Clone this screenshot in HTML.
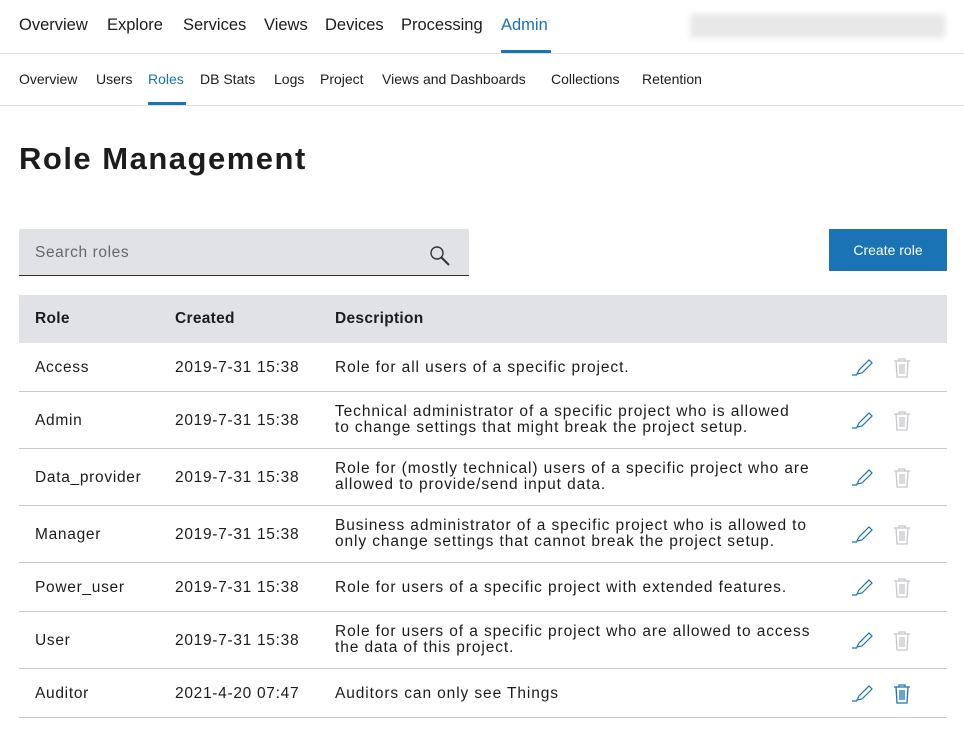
<!DOCTYPE html><html><head><style>
body{margin:0;width:964px;height:738px;overflow:hidden;background:#fff;font-family:"Liberation Sans",sans-serif;color:#1c1c1c;position:relative}
.a{position:absolute;white-space:nowrap}
.t1{font-size:16.5px;top:16px}
.t2{font-size:14px;top:71px}
.blue{color:#1a73b5}
.line{position:absolute;left:0;width:964px;height:1px;background:#dfdfdf}
.cell{position:absolute;font-size:15.5px;line-height:16px;letter-spacing:0.9px}
.rl{position:absolute;left:19px;width:928px;height:1px;background:#c8c8c8}
</style></head><body>
<div class="a t1" style="left:19px">Overview</div>
<div class="a t1" style="left:107px">Explore</div>
<div class="a t1" style="left:183px">Services</div>
<div class="a t1" style="left:264px">Views</div>
<div class="a t1" style="left:325px">Devices</div>
<div class="a t1" style="left:401px">Processing</div>
<div class="a t1 blue" style="left:501px">Admin</div>
<div class="a" style="left:501px;top:50px;width:50px;height:3px;background:#1a73b5"></div>
<div class="a" style="left:690px;top:14px;width:255px;height:24px;background:#e8e8e8;filter:blur(3px)"></div>
<div class="line" style="top:53px"></div>
<div class="a t2" style="left:19px">Overview</div>
<div class="a t2" style="left:96px">Users</div>
<div class="a t2 blue" style="left:148px">Roles</div>
<div class="a t2" style="left:200px">DB Stats</div>
<div class="a t2" style="left:274px">Logs</div>
<div class="a t2" style="left:320px">Project</div>
<div class="a t2" style="left:382px">Views and Dashboards</div>
<div class="a t2" style="left:551px">Collections</div>
<div class="a t2" style="left:642px">Retention</div>
<div class="a" style="left:148px;top:102px;width:38px;height:3px;background:#1a73b5"></div>
<div class="line" style="top:105px"></div>
<div class="a" style="left:19px;top:141px;font-size:31px;font-weight:bold;letter-spacing:1.5px">Role Management</div>
<div class="a" style="left:19px;top:229px;width:450px;height:46px;background:#e0e2e5;border-bottom:1px solid #333"></div>
<div class="a" style="left:35px;top:244px;font-size:15.5px;letter-spacing:0.6px;color:#666">Search roles</div>
<svg class="a" style="left:428px;top:244px" width="24" height="24" viewBox="0 0 24 24"><circle cx="9" cy="9" r="6" fill="none" stroke="#333" stroke-width="1.4"/><path d="M13.5 13.5L21 21" stroke="#333" stroke-width="2"/></svg>
<div class="a" style="left:829px;top:229px;width:118px;height:42px;background:#1a73b5;color:#fff;font-size:14px;line-height:42px;text-align:center">Create role</div>
<div class="a" style="left:19px;top:295px;width:928px;height:48px;background:#e0e2e5"></div>
<div class="cell" style="left:35px;top:311px;font-weight:bold;letter-spacing:0.3px">Role</div>
<div class="cell" style="left:175px;top:311px;font-weight:bold;letter-spacing:0.3px">Created</div>
<div class="cell" style="left:335px;top:311px;font-weight:bold;letter-spacing:0.3px">Description</div>
<div id="rows"></div>
<script>
var d=[[343,392,"Access","2019-7-31 15:38","Role for all users of a specific project."],
[392,449,"Admin","2019-7-31 15:38","Technical administrator of a specific project who is allowed<br>to change settings that might break the project setup."],
[449,506,"Data_provider","2019-7-31 15:38","Role for (mostly technical) users of a specific project who are<br>allowed to provide/send input data."],
[506,563,"Manager","2019-7-31 15:38","Business administrator of a specific project who is allowed to<br>only change settings that cannot break the project setup."],
[563,612,"Power_user","2019-7-31 15:38","Role for users of a specific project with extended features."],
[612,669,"User","2019-7-31 15:38","Role for users of a specific project who are allowed to access<br>the data of this project."],
[669,718,"Auditor","2021-4-20 07:47","Auditors can only see Things"]];
var h="";d.forEach(function(r,i){var m=(r[0]+r[1])/2;var two=r[4].indexOf("<br>")>0;
var tc=i==6?"#1a73b5":"#c5c7ca";
h+='<div class="cell" style="left:35px;top:'+(m-8)+'px;letter-spacing:0.7px">'+r[2]+'</div><div class="cell" style="left:175px;top:'+(m-8)+'px;letter-spacing:0.7px">'+r[3]+'</div><div class="cell" style="left:335px;top:'+(two?m-17:m-8)+'px">'+r[4]+'</div>';
h+='<svg class="a" style="left:851px;top:'+(m-10)+'px" width="24" height="20" viewBox="0 0 24 20"><path d="M1 17H6M6 16L8 12L18 2L21 5L11 15Z" fill="none" stroke="#1a73b5" stroke-width="1.2"/></svg>';
h+='<svg class="a" style="left:892px;top:'+(m-11)+'px" width="20" height="22" viewBox="0 0 20 22"><path d="M2 4H18M7 4V2H13V4M4 4L5 20H15L16 4M8 7V17M10 7V17M12 7V17" fill="none" stroke="'+tc+'" stroke-width="1.3"/></svg>';
h+='<div class="rl" style="top:'+(r[1]-1)+'px"></div>';});
document.getElementById("rows").innerHTML=h;
</script>
</body></html>
